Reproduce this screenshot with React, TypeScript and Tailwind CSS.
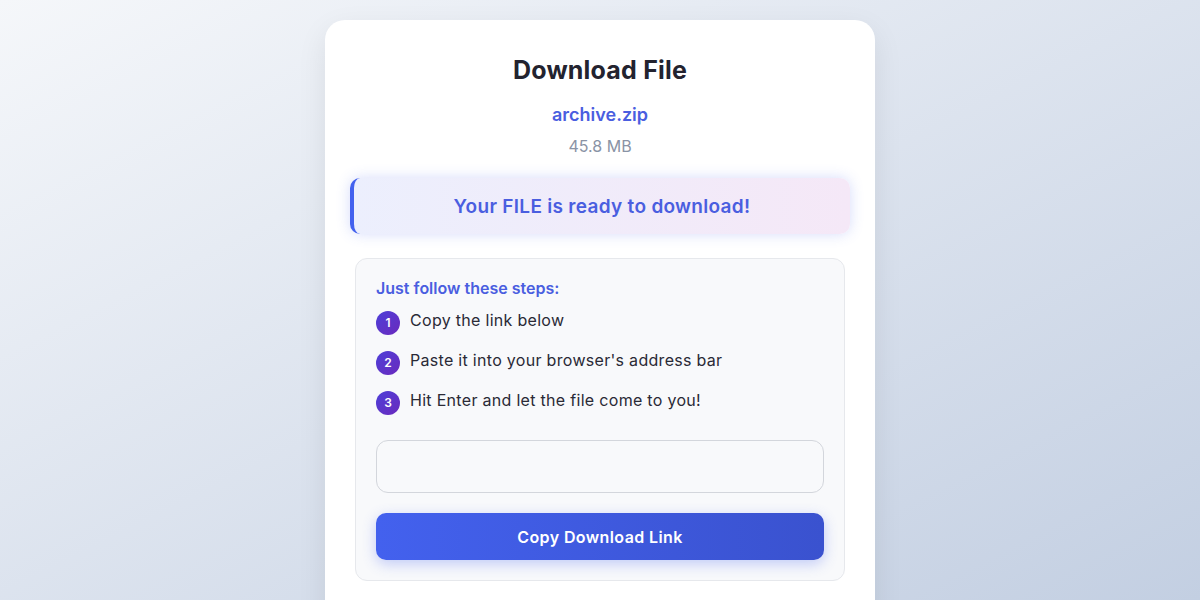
export default function App() {
  const steps = [
    "Copy the link below",
    "Paste it into your browser's address bar",
    "Hit Enter and let the file come to you!",
  ];

  return (
    <div className="flex h-[600px] w-full justify-center overflow-hidden bg-gradient-to-br from-[#f5f7fa] to-[#c3cfe2] pt-[20px] font-['Inter',sans-serif]">
      <div className="flex h-[620px] w-[550px] flex-col rounded-[20px] bg-white px-[25px] pt-[34px] shadow-[0_10px_30px_rgba(0,0,0,0.08)]">
        <h1 className="text-center text-[25px] font-bold leading-[32px] tracking-[0.2px] text-[#23232f]">
          Download File
        </h1>
        <p className="mt-[17px] text-center text-[18px] font-semibold leading-[24px] text-[#4a5ee0]">
          archive.zip
        </p>
        <p className="mt-[8px] text-center text-[16px] leading-[22px] text-[#8a93a5]">
          45.8 MB
        </p>

        <div className="mt-[21px] flex h-[56px] items-center justify-center rounded-[10px] border-l-4 border-[#4361ee] bg-gradient-to-r from-[#eceffd] to-[#f5e8f7] shadow-[0_0_14px_rgba(67,97,238,0.22)]">
          <span className="mt-[2px] text-[19px] font-semibold tracking-[0.3px] text-[#4a5ee0]">
            Your FILE is ready to download!
          </span>
        </div>

        <div className="mx-[5px] mt-[24px] rounded-[12px] border border-[#e6e8ec] bg-[#f8f9fb] px-[20px] pb-[20px] pt-[18px]">
          <p className="text-[16px] font-semibold leading-[22px] text-[#4a5ee0]">
            Just follow these steps:
          </p>
          <ul className="mt-[12px] flex flex-col gap-[16px]">
            {steps.map((s, i) => (
              <li key={s} className="flex items-center gap-[10px]">
                <span className="flex h-[24px] w-[24px] shrink-0 items-center justify-center rounded-full bg-gradient-to-br from-[#4b3fd8] to-[#6a28bd] text-[12px] font-semibold text-white">
                  {i + 1}
                </span>
                <span className="-mt-[6px] text-[16px] leading-[24px] tracking-[0.3px] text-[#2a2a36]">
                  {s}
                </span>
              </li>
            ))}
          </ul>
          <input
            readOnly
            className="mt-[25px] block h-[53px] w-full rounded-[12px] border border-[#d3d6dc] bg-[#f8f9fb] px-4 outline-none"
          />
          <button className="mt-[20px] flex h-[47px] w-full items-center justify-center rounded-[10px] bg-gradient-to-r from-[#4361ee] to-[#3a52cf] text-[16px] font-semibold tracking-[0.4px] text-white shadow-[0_4px_14px_rgba(67,97,238,0.3)]">
            Copy Download Link
          </button>
        </div>
      </div>
    </div>
  );
}
